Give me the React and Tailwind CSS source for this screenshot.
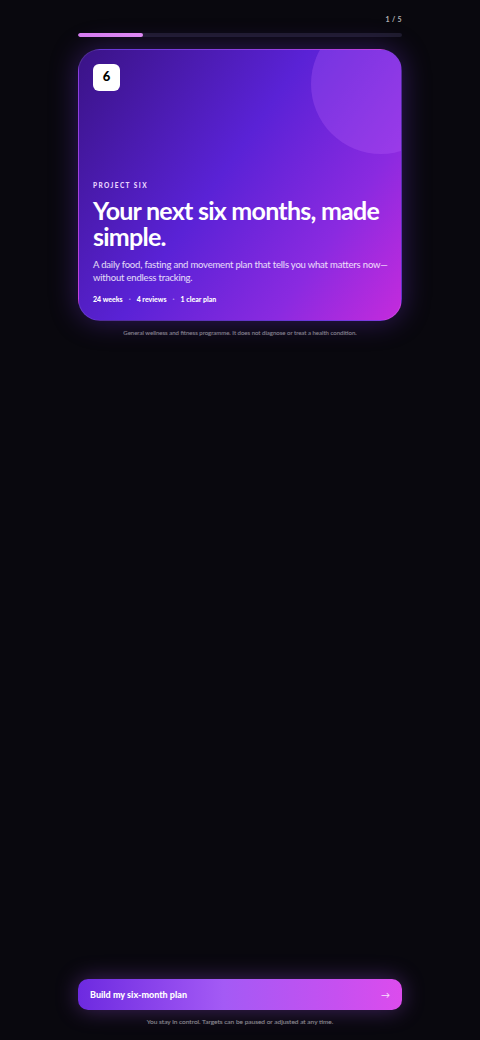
import React from "react";

const App = () => {
  return (
    <div
      className="min-h-screen w-full bg-[#09080e] text-white flex flex-col px-[78px]"
      style={{ fontFamily: 'Lato, "Noto Sans", sans-serif' }}
    >
      {/* Progress */}
      <div className="pt-[14px]">
        <div className="flex justify-end text-[7px] font-bold text-white/70 tracking-wider">1 / 5</div>
        <div className="mt-[8px] h-[4px] w-full rounded-full bg-[#1d1b2b] overflow-hidden">
          <div className="h-full w-[20%] rounded-full bg-gradient-to-r from-[#d87ef0] to-[#e48ef5]" />
        </div>
      </div>

      {/* Hero card */}
      <div className="relative mt-[12px] h-[272px] rounded-[22px] overflow-hidden border border-white/10 bg-[linear-gradient(125deg,#3a1386_0%,#5a22d6_45%,#8a2ae0_75%,#c52bdc_100%)] shadow-[0_0_28px_rgba(124,58,237,0.35)] flex flex-col justify-between p-[14px]">
        <div className="absolute right-[-50px] top-[-36px] w-[140px] h-[140px] rounded-full bg-[#c26bff]/25" />
        <div className="relative w-[27px] h-[27px] rounded-[6px] bg-white text-black flex items-center justify-center text-[13px] font-black">
          6
        </div>
        <div className="relative">
          <div className="text-[6.5px] font-black tracking-[0.22em] text-[#e9d5ff]">PROJECT SIX</div>
          <h1 className="mt-[6px] mr-[-12px] text-[25px] leading-[26px] font-bold tracking-[-0.03em] text-white">
            Your next six months, made simple.
          </h1>
          <p className="mt-[9px] text-[9.5px] leading-[13px] tracking-[-0.02em] text-white/85 mr-[-8px]">
            A daily food, fasting and movement plan that tells you what matters now—without endless tracking.
          </p>
          <div className="mt-[10px] mb-[1px] flex items-center gap-[6px] text-[7px] font-black text-white">
            <span>24 weeks</span>
            <span className="text-white/50">·</span>
            <span>4 reviews</span>
            <span className="text-white/50">·</span>
            <span>1 clear plan</span>
          </div>
        </div>
      </div>

      <p className="mt-[7px] text-center text-[6px] text-white/55">
        General wellness and fitness programme. It does not diagnose or treat a health condition.
      </p>

      <div className="flex-1" />

      {/* CTA */}
      <button className="h-[31px] w-full rounded-[10px] bg-[linear-gradient(90deg,#6d2ae0_0%,#a45af5_45%,#c650f0_80%,#dc4ced_100%)] shadow-[0_0_22px_rgba(168,85,247,0.35)] flex items-center justify-between px-[12px] text-white">
        <span className="text-[9px] font-black">Build my six-month plan</span>
        <span className="text-[9px] text-white/85">→</span>
      </button>
      <p className="mt-[7px] mb-[13px] text-center text-[6.5px] text-white/55">
        You stay in control. Targets can be paused or adjusted at any time.
      </p>
    </div>
  );
};

export default App;
